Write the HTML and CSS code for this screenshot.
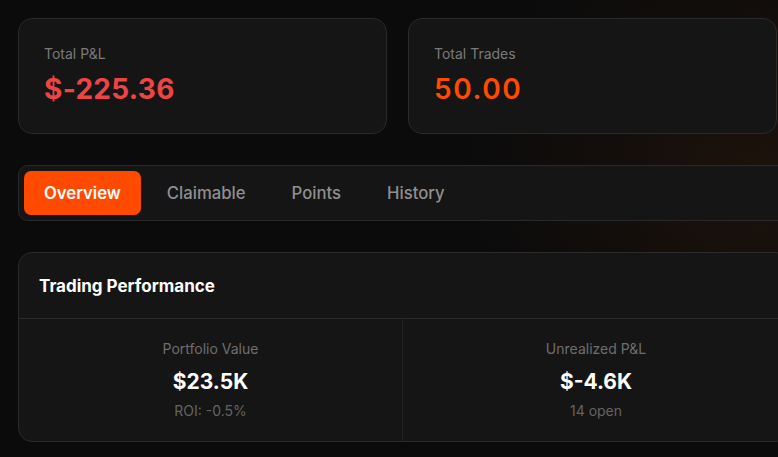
FILE: index.html
```html
<!DOCTYPE html>
<html lang="en">
<head>
<meta charset="utf-8">
<title>Dashboard</title>
<link rel="stylesheet" href="styles.css">
</head>
<body>
<main class="page">
  <section class="stats">
    <div class="stat-card">
      <div class="stat-label">Total P&amp;L</div>
      <div class="stat-value negative">$-225.36</div>
    </div>
    <div class="stat-card">
      <div class="stat-label">Total Trades</div>
      <div class="stat-value accent">50.00</div>
    </div>
  </section>

  <nav class="tabs">
    <button class="tab active">Overview</button>
    <button class="tab">Claimable</button>
    <button class="tab">Points</button>
    <button class="tab">History</button>
  </nav>

  <section class="perf">
    <header class="perf-head">Trading Performance</header>
    <div class="perf-grid">
      <div class="perf-cell">
        <div class="perf-label">Portfolio Value</div>
        <div class="perf-value">$23.5K</div>
        <div class="perf-sub">ROI: -0.5%</div>
      </div>
      <div class="perf-cell">
        <div class="perf-label">Unrealized P&amp;L</div>
        <div class="perf-value">$-4.6K</div>
        <div class="perf-sub">14 open</div>
      </div>
    </div>
  </section>
</main>
</body>
</html>
```
FILE: styles.css
```css
* { box-sizing: border-box; }
html, body {
  margin: 0;
  padding: 0;
  height: 100%;
  overflow: hidden;
}
body {
  background: #0b0b0b;
  background-image: radial-gradient(ellipse 420px 380px at 760px 170px, rgba(60, 30, 12, 0.35), rgba(0,0,0,0) 70%);
  font-family: Inter, "Noto Sans", sans-serif;
  color: #fff;
}
.page {
  width: 790px;
  padding: 18px 0 0 18px;
  display: flex;
  flex-direction: column;
  gap: 31px;
}
.stats {
  display: grid;
  grid-template-columns: 369px 369px;
  gap: 21px;
}
.stat-card {
  height: 116px;
  background: #151515;
  border: 1px solid #2a2a2a;
  border-radius: 14px;
  padding: 25px 25px;
}
.stat-label {
  font-size: 14px;
  color: #7a7a7a;
  line-height: 20px;
}
.stat-value {
  margin-top: 8px;
  font-size: 28px;
  font-weight: 700;
  line-height: 34px;
  letter-spacing: 0.3px;
}
.negative { color: #ef4444; }
.accent { color: #ff4a00; font-weight: 600; letter-spacing: 1.6px; }

.tabs {
  width: 772px;
  height: 56px;
  background: #151515;
  border: 1px solid #2a2a2a;
  border-radius: 10px;
  padding: 5px;
  display: flex;
  gap: 6px;
}
.tab {
  font-family: inherit;
  font-size: 16.7px;
  font-weight: 500;
  color: #8f8f8f;
  background: transparent;
  border: 0;
  border-radius: 7px;
  padding: 0 20px;
  height: 44px;
  cursor: pointer;
}
.tab.active {
  background: #ff4a00;
  color: #fff;
  font-weight: 600;
}

.perf {
  width: 772px;
  background: #151515;
  border: 1px solid #2a2a2a;
  border-radius: 14px;
}
.perf-head {
  height: 66px;
  padding: 0 20px;
  display: flex;
  align-items: center;
  font-size: 17px;
  font-weight: 700;
  border-bottom: 1px solid #2a2a2a;
}
.perf-grid {
  display: grid;
  grid-template-columns: 383px 1fr;
}
.perf-cell {
  height: 122px;
  display: flex;
  flex-direction: column;
  align-items: center;
  padding-top: 20px;
}
.perf-cell + .perf-cell {
  border-left: 1px solid #242424;
}
.perf-label {
  font-size: 14px;
  color: #6e6e6e;
  line-height: 20px;
}
.perf-value {
  margin-top: 10px;
  font-size: 21px;
  font-weight: 700;
  line-height: 26px;
}
.perf-sub {
  margin-top: 6px;
  font-size: 14px;
  color: #636363;
  line-height: 20px;
}
```
